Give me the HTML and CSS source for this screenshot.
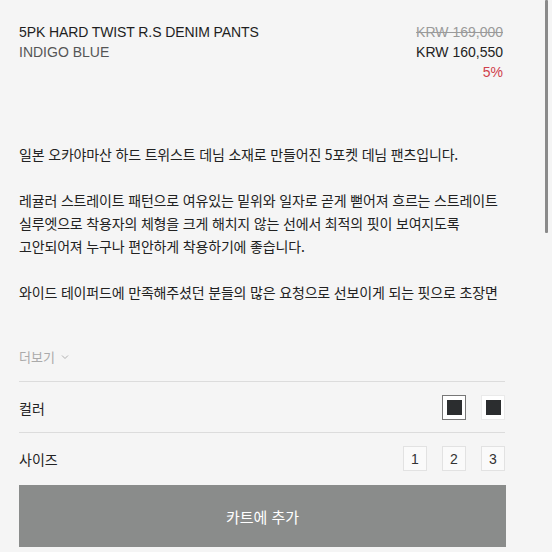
FILE: index.html
```html
<!DOCTYPE html>
<html lang="ko">
<head>
<meta charset="utf-8">
<link rel="stylesheet" href="styles.css">
</head>
<body>
<div class="page">
  <header class="head">
    <div class="name">
      <div class="title">5PK HARD TWIST R.S DENIM PANTS</div>
      <div class="color-name">INDIGO BLUE</div>
    </div>
    <div class="prices">
      <div class="old">KRW 169,000</div>
      <div class="now">KRW 160,550</div>
      <div class="off">5%</div>
    </div>
  </header>
  <section class="desc">
    <p>일본 오카야마산 하드 트위스트 데님 소재로 만들어진 5포켓 데님 팬츠입니다.</p>
    <p>레귤러 스트레이트 패턴으로 여유있는 밑위와 일자로 곧게 뻗어져 흐르는 스트레이트<br>실루엣으로 착용자의 체형을 크게 해치지 않는 선에서 최적의 핏이 보여지도록<br>고안되어져 누구나 편안하게 착용하기에 좋습니다.</p>
    <p>와이드 테이퍼드에 만족해주셨던 분들의 많은 요청으로 선보이게 되는 핏으로 초장면</p>
  </section>
  <div class="more">더보기 <svg class="chev" width="8" height="6" viewBox="0 0 8 6"><path d="M1 1.5 L4 4.5 L7 1.5" fill="none" stroke="#b0b0b0" stroke-width="1"/></svg></div>
  <div class="row">
    <span class="label">컬러</span>
    <div class="opts">
      <span class="swatch selected"><span class="chip"></span></span>
      <span class="swatch"><span class="chip"></span></span>
    </div>
  </div>
  <div class="row">
    <span class="label">사이즈</span>
    <div class="opts">
      <span class="size">1</span>
      <span class="size">2</span>
      <span class="size">3</span>
    </div>
  </div>
  <button class="cart">카트에 추가</button>
</div>
<div class="scrollbar"></div>
</body>
</html>
```

FILE: styles.css
```css
html, body {
  margin: 0;
  padding: 0;
  background: #f5f5f5;
}
body {
  width: 552px;
  height: 552px;
  overflow: hidden;
  position: relative;
  font-family: "Liberation Sans", "Noto Sans CJK KR", sans-serif;
  color: #222;
}
.page {
  width: 486px;
  padding: 22px 0 0 19px;
}
.head {
  display: flex;
  justify-content: space-between;
  font-size: 14px;
  line-height: 20px;
}
.title {
  color: #1e1e1e;
  letter-spacing: -0.1px;
}
.color-name {
  color: #555;
}
.prices {
  text-align: right;
  padding-right: 2px;
}
.old {
  color: #9a9a9a;
  text-decoration: line-through;
}
.now {
  color: #222;
}
.off {
  color: #d0404c;
}
.desc {
  margin-top: 61px;
  font-family: "Noto Sans CJK KR", sans-serif;
  font-size: 14px;
  line-height: 23px;
  color: #222;
  letter-spacing: -0.17px;
  white-space: nowrap;
}
.desc p {
  margin: 0 0 23px 0;
}
.desc p:last-child {
  margin-bottom: 0;
}
.more {
  margin-top: 43px;
  height: 20px;
  line-height: 20px;
  font-family: "Noto Sans CJK KR", sans-serif;
  font-size: 13px;
  color: #aaa;
  display: flex;
  align-items: center;
  gap: 6px;
  margin-bottom: 14px;
}
.row {
  border-top: 1px solid #dcdcdc;
  display: flex;
  align-items: center;
  justify-content: space-between;
  padding: 13px 0 12px 0;
}
.label {
  font-family: "Noto Sans CJK KR", sans-serif;
  font-size: 14px;
  color: #222;
}
.opts {
  display: flex;
  gap: 15px;
}
.swatch {
  width: 22px;
  height: 23px;
  border: 1px solid #eaeaea;
  background: #fff;
  display: flex;
  align-items: center;
  justify-content: center;
}
.swatch.selected {
  border-color: #777;
}
.chip {
  width: 15px;
  height: 15px;
  background: #2b2d2f;
}
.size {
  width: 22px;
  height: 23px;
  border: 1px solid #e2e2e2;
  background: #fafafa;
  display: flex;
  align-items: center;
  justify-content: center;
  font-size: 14px;
  color: #333;
}
.cart {
  display: block;
  width: 487px;
  height: 62px;
  margin-top: 2px;
  border: none;
  background: #8a8c8b;
  color: #fff;
  font-family: "Noto Sans CJK KR", sans-serif;
  font-size: 15px;
  padding: 0;
}
.scrollbar {
  position: absolute;
  left: 545px;
  top: 0;
  width: 3px;
  height: 233px;
  background: #8a8a8a;
  border-radius: 1px;
}
```
